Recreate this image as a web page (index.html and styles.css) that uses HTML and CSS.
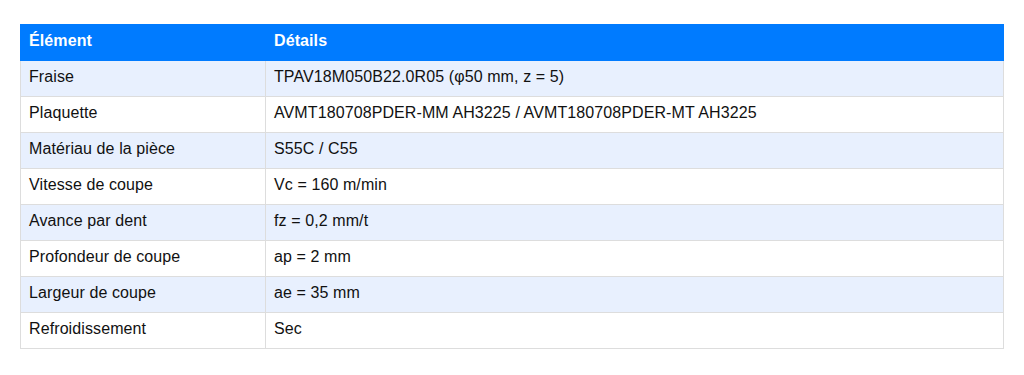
FILE: index.html
```html
<!DOCTYPE html>
<html lang="fr">
<head>
<meta charset="utf-8">
<link rel="stylesheet" href="styles.css">
</head>
<body>
<table class="spec">
  <thead>
    <tr><th class="col-a">Élément</th><th>Détails</th></tr>
  </thead>
  <tbody>
    <tr><td>Fraise</td><td>TPAV18M050B22.0R05 (φ50 mm, z = 5)</td></tr>
    <tr><td>Plaquette</td><td>AVMT180708PDER-MM AH3225 / AVMT180708PDER-MT AH3225</td></tr>
    <tr><td>Matériau de la pièce</td><td>S55C / C55</td></tr>
    <tr><td>Vitesse de coupe</td><td>Vc = 160 m/min</td></tr>
    <tr><td>Avance par dent</td><td>fz = 0,2 mm/t</td></tr>
    <tr><td>Profondeur de coupe</td><td>ap = 2 mm</td></tr>
    <tr><td>Largeur de coupe</td><td>ae = 35 mm</td></tr>
    <tr><td>Refroidissement</td><td>Sec</td></tr>
  </tbody>
</table>
</body>
</html>
```
FILE: styles.css
```css
html, body { margin: 0; padding: 0; background: #fff; }
body { padding: 24px 20px 0 20px; font-family: "Liberation Sans", Arial, sans-serif; font-size: 16px; color: #111; }
.spec { width: 100%; border-collapse: collapse; table-layout: fixed; }
.spec th, .spec td { border: 1px solid #ddd; height: 36px; padding: 0 8px 4px 8px; text-align: left; vertical-align: middle; box-sizing: border-box; letter-spacing: 0.1px; }
.spec th { background: #007bff; color: #fff; font-weight: bold; border-color: #007bff; border-left-color: #ddd; }
.spec th:first-child { border-left-color: #007bff; }
.spec .col-a { width: 245px; }
.spec tbody tr:nth-child(odd) td { background: #e8f0fe; }
```
